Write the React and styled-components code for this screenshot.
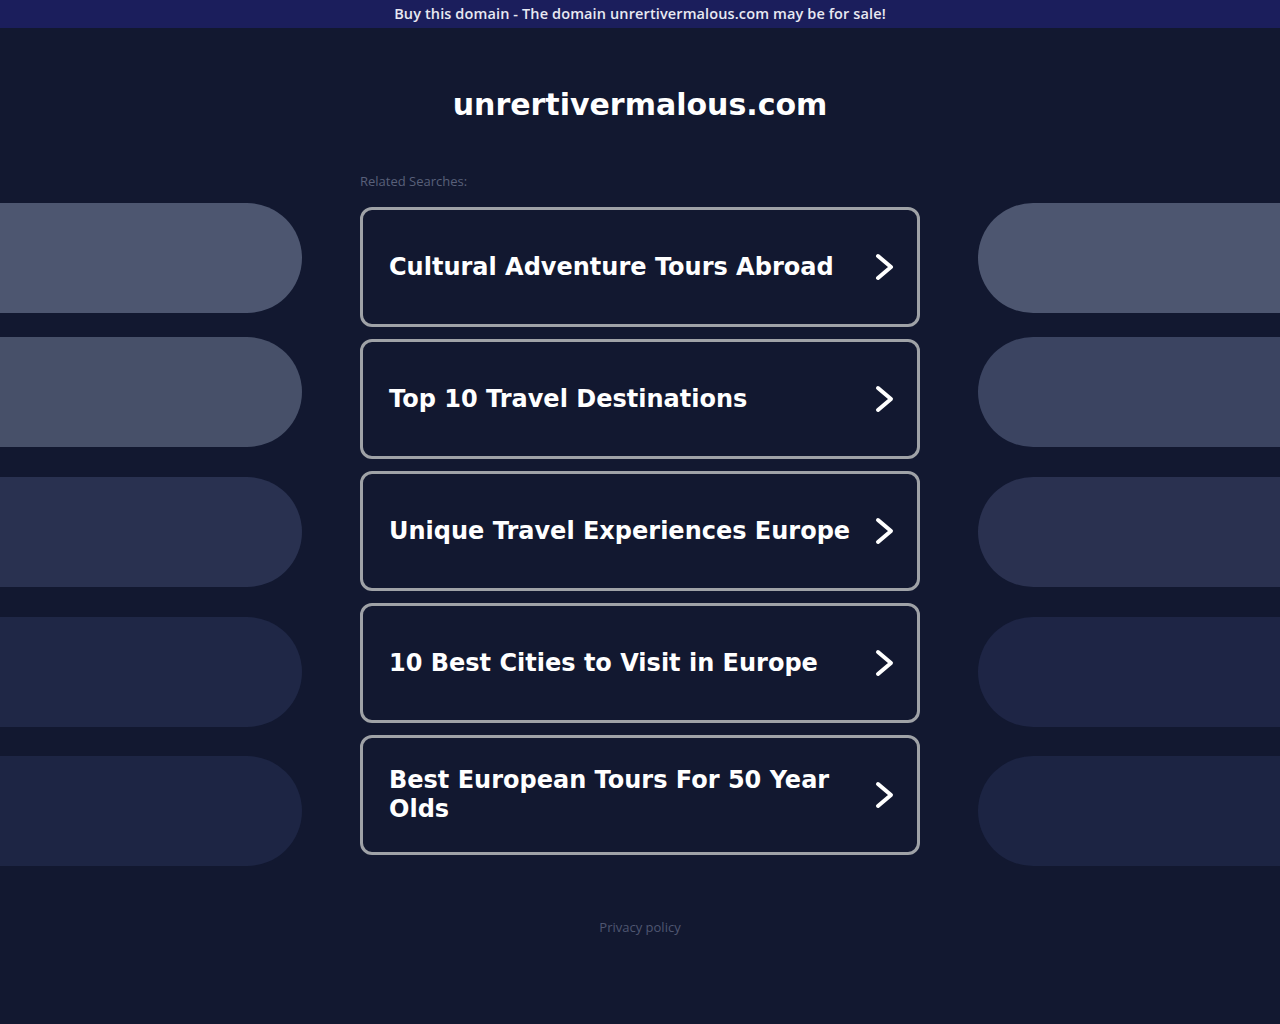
import React from "react";
import styled, { createGlobalStyle } from "styled-components";

const Global = createGlobalStyle`
  html, body { margin: 0; padding: 0; background: #121830; }
  body { font-family: "DejaVu Sans", sans-serif; }
  * { box-sizing: border-box; }
`;

const Page = styled.div`
  min-height: 1024px;
  background: #121830;
  overflow: hidden;
`;

const TopBar = styled.div`
  height: 28px;
  background: #1b1e5c;
  color: #e8e9f2;
  font-family: "Open Sans", "Liberation Sans", sans-serif;
  font-weight: 600;
  font-size: 14.5px;
  letter-spacing: 0.12px;
  line-height: 28px;
  text-align: center;
`;

const Title = styled.h1`
  margin: 0;
  padding-top: 59px;
  height: 144px;
  font-family: "DejaVu Sans", sans-serif;
  font-weight: 700;
  font-size: 30px;
  line-height: 36px;
  color: #ffffff;
  text-align: center;
`;

const Row = styled.div`
  display: grid;
  grid-template-columns: 360px 560px 360px;
`;

const Side = styled.div`
  display: flex;
  flex-direction: column;
  align-items: ${(p) => (p.$right ? "flex-end" : "flex-start")};
  padding-top: 31px;
`;

const Pill = styled.div`
  width: 302px;
  height: 110px;
  margin-top: ${(p) => p.$gap}px;
  background: ${(p) => p.$color};
  border-radius: ${(p) => (p.$right ? "55px 0 0 55px" : "0 55px 55px 0")};
`;

const Center = styled.div`
  display: flex;
  flex-direction: column;
`;

const Label = styled.div`
  font-family: "Open Sans", "Liberation Sans", sans-serif;
  font-size: 13px;
  line-height: 18px;
  color: #59607a;
  margin-bottom: 17px;
`;

const List = styled.div`
  display: flex;
  flex-direction: column;
  gap: 12px;
`;

const Item = styled.a`
  display: flex;
  align-items: center;
  justify-content: space-between;
  height: 120px;
  padding: 0 22px 0 26px;
  border: 3px solid #9fa2a7;
  border-radius: 12px;
  background: #121830;
  color: #ffffff;
  text-decoration: none;
  cursor: pointer;
`;

const ItemText = styled.span`
  font-family: "DejaVu Sans", sans-serif;
  font-weight: 700;
  font-size: 24px;
  line-height: 29px;
  max-width: 470px;
`;

const Chevron = styled.svg`
  flex: none;
  width: 24px;
  height: 30px;
`;

const Footer = styled.div`
  margin-top: 52px;
  text-align: center;
  font-family: "Open Sans", "Liberation Sans", sans-serif;
  font-size: 13px;
  line-height: 18px;
  color: #4f5671;
`;

const items = [
  "Cultural Adventure Tours Abroad",
  "Top 10 Travel Destinations",
  "Unique Travel Experiences Europe",
  "10 Best Cities to Visit in Europe",
  "Best European Tours For 50 Year Olds",
];

const leftPills = [
  { gap: 0, color: "#4d5670" },
  { gap: 24, color: "#475069" },
  { gap: 30, color: "#293150" },
  { gap: 30, color: "#1f2746" },
  { gap: 29, color: "#1d2544" },
];

const rightPills = [
  { gap: 0, color: "#4d5670" },
  { gap: 24, color: "#3b4461" },
  { gap: 30, color: "#2a3150" },
  { gap: 30, color: "#1e2545" },
  { gap: 29, color: "#1c2443" },
];

const Arrow = () => (
  <Chevron viewBox="0 0 24 30">
    <polyline
      points="7,4 20,15 7,26"
      fill="none"
      stroke="#ffffff"
      strokeWidth="4"
      strokeLinecap="round"
      strokeLinejoin="round"
    />
  </Chevron>
);

export default function App() {
  return (
    <Page>
      <Global />
      <TopBar>Buy this domain - The domain unrertivermalous.com may be for sale!</TopBar>
      <Title>unrertivermalous.com</Title>
      <Row>
        <Side>
          {leftPills.map((p, i) => (
            <Pill key={i} $gap={p.gap} $color={p.color} />
          ))}
        </Side>
        <Center>
          <Label>Related Searches:</Label>
          <List>
            {items.map((t) => (
              <Item key={t}>
                <ItemText>{t}</ItemText>
                <Arrow />
              </Item>
            ))}
          </List>
        </Center>
        <Side $right>
          {rightPills.map((p, i) => (
            <Pill key={i} $right $gap={p.gap} $color={p.color} />
          ))}
        </Side>
      </Row>
      <Footer>Privacy policy</Footer>
    </Page>
  );
}
